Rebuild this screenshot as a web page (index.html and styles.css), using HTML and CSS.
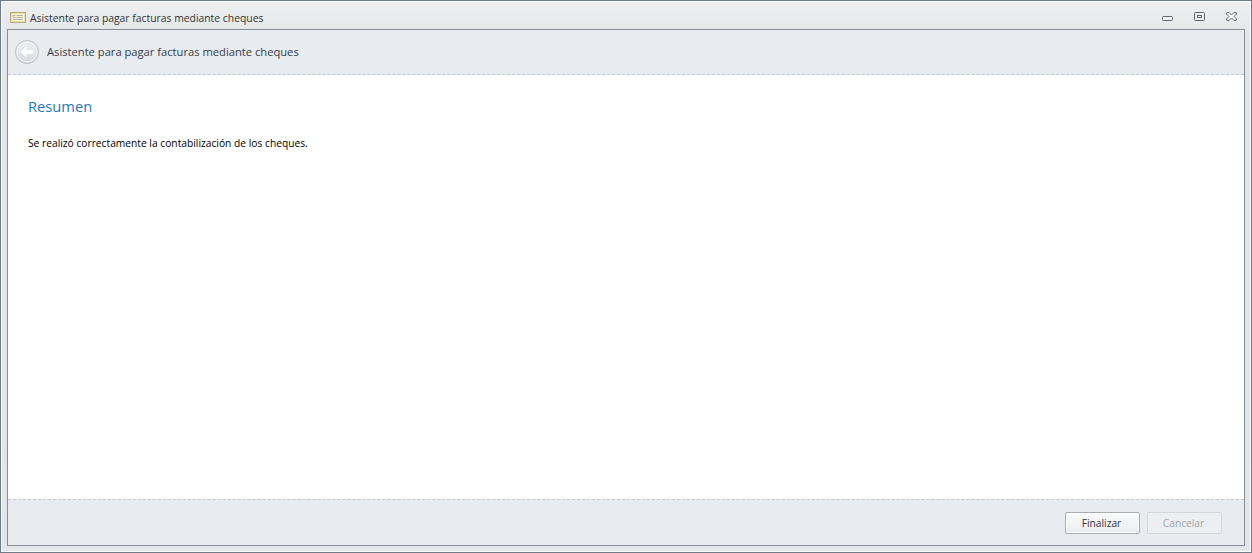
FILE: index.html
```html
<!DOCTYPE html>
<html lang="es">
<head>
<meta charset="utf-8">
<title>Asistente para pagar facturas mediante cheques</title>
<link rel="stylesheet" href="styles.css">
</head>
<body>
<div class="window">
  <div class="titlebar">
    <svg class="app-icon" width="16" height="11" viewBox="0 0 16 11">
      <rect x="0.5" y="0.5" width="15" height="10" fill="#efe2b0" stroke="#b8a974"/>
      <rect x="2" y="2" width="12" height="7" fill="#fbf7e2"/>
      <path d="M3 3.500h2.500M6.500 3.500H13M3 5.500h2.500M6.500 5.500H13M3 7.500h10" stroke="#b5b094" stroke-width="1" fill="none"/>
      <path d="M3 3v2" stroke="#a8c48a" stroke-width="1" fill="none"/>
    </svg>
    <span class="title">Asistente para pagar facturas mediante cheques</span>
    <div class="controls">
      <svg class="ctl ctl-min" width="11" height="6" viewBox="0 0 11 6"><rect x="0.5" y="0.5" width="10" height="4" rx="1" fill="#f4f5f6" stroke="#5b646c"/></svg>
      <svg class="ctl ctl-max" width="11" height="9" viewBox="0 0 11 9"><rect x="0.5" y="0.5" width="10" height="8" rx="1" fill="#eef0f1" stroke="#5b646c"/><rect x="3.500" y="3.500" width="4" height="2" fill="#fff" stroke="#5b646c"/></svg>
      <svg class="ctl ctl-close" width="11" height="9" viewBox="0 0 11 9"><path d="M1 .5h2l2.500 2.500L8 .5h2l.5.500v1L8 4.500 10.500 7v1l-.5.500H8L5.500 6 3 8.500H1L.5 8V7L3 4.500.5 2V1z" fill="#fff" stroke="#5b646c"/></svg>
    </div>
  </div>
  <div class="panel">
    <header class="wizard-head">
      <svg class="back" width="24" height="24" viewBox="0 0 24 24">
        <defs>
          <linearGradient id="backfill" x1="0" y1="0" x2="0" y2="1">
            <stop offset="0" stop-color="#eef0f3"/>
            <stop offset="1" stop-color="#d3d8de"/>
          </linearGradient>
        </defs>
        <circle cx="12" cy="12" r="11.500" fill="url(#backfill)" stroke="#b9bfc6"/>
        <circle cx="12" cy="12" r="10" fill="none" stroke="#f8f9fa"/>
        <path d="M5 12l6.500-5.500v3.500h6a1 1 0 0 1 1 1v2a1 1 0 0 1-1 1h-6v3.500z" fill="#fbfcfc"/>
      </svg>
      <span class="head-title">Asistente para pagar facturas mediante cheques</span>
    </header>
    <main class="content">
      <h1 class="heading">Resumen</h1>
      <p class="message">Se realizó correctamente la contabilización de los cheques.</p>
    </main>
    <footer class="wizard-foot">
      <button class="btn btn-primary" type="button"><span class="btn-label">Finalizar</span></button>
      <button class="btn" type="button" disabled><span class="btn-label">Cancelar</span></button>
    </footer>
  </div>
</div>
</body>
</html>
```

FILE: styles.css
```css
* { box-sizing: border-box; }
html, body { margin: 0; padding: 0; height: 100%; overflow: hidden; }
body { font-family: "Open Sans", "Liberation Sans", sans-serif; font-size: 11px; }
.window {
  width: 1252px;
  height: 553px;
  display: flex;
  flex-direction: column;
  border: 1px solid #6e7a85;
  box-shadow: inset 0 0 0 1px #fbfcfc;
  background: linear-gradient(#eef0f0 0, #e1e5e8 40px, #e2e6ea 100%);
  padding: 0 6px 6px 6px;
}
.titlebar {
  height: 28px;
  flex: none;
  display: flex;
  align-items: center;
  padding: 6px 0 0 3px;
}
.app-icon { margin-right: 4px; flex: none; margin-top: -1px; }
.title { color: #333; font-size: 10.370px; }
.controls { margin-left: auto; display: flex; align-items: center; gap: 21px; padding-right: 8px; margin-top: -4px; }
.ctl { display: block; }
.ctl-min { margin-top: 5px; }
.panel {
  flex: 1;
  display: flex;
  flex-direction: column;
  border: 1px solid #868e93;
  background: #e8ebef;
  min-height: 0;
}
.wizard-head {
  height: 45px;
  flex: none;
  display: flex;
  align-items: center;
  padding-left: 7px;
  gap: 8px;
  border-bottom: 1px dashed #c3c7cc;
}
.back { flex: none; }
.head-title { color: #36404a; font-size: 11.180px; margin-top: -2px; }
.content { flex: 1; background: #fff; padding: 21px 20px 0; }
.heading { margin: 0; font-size: 14.700px; line-height: 20px; font-weight: 400; color: #1e7ac0; }
.message { margin: 20px 0 0; font-size: 10.240px; line-height: 14px; color: #000; }
.wizard-foot {
  height: 46px;
  flex: none;
  display: flex;
  justify-content: flex-end;
  align-items: flex-start;
  gap: 7px;
  padding: 12px 22px 0 0;
  border-top: 1px dashed #c3c7cc;
}
.btn {
  width: 75px;
  height: 22px;
  padding: 0 2px 0 0;
  font: inherit;
  font-size: 10.200px;
  color: #a0a5aa;
  background: #eceef1;
  border: 1px solid #d3d7db;
  border-radius: 2px;
}
.btn-primary {
  color: #333;
  background: linear-gradient(#fbfbfc, #e9ecef);
  border-color: #a6acb2;
  box-shadow: inset 0 0 0 1px #fff;
}
```
